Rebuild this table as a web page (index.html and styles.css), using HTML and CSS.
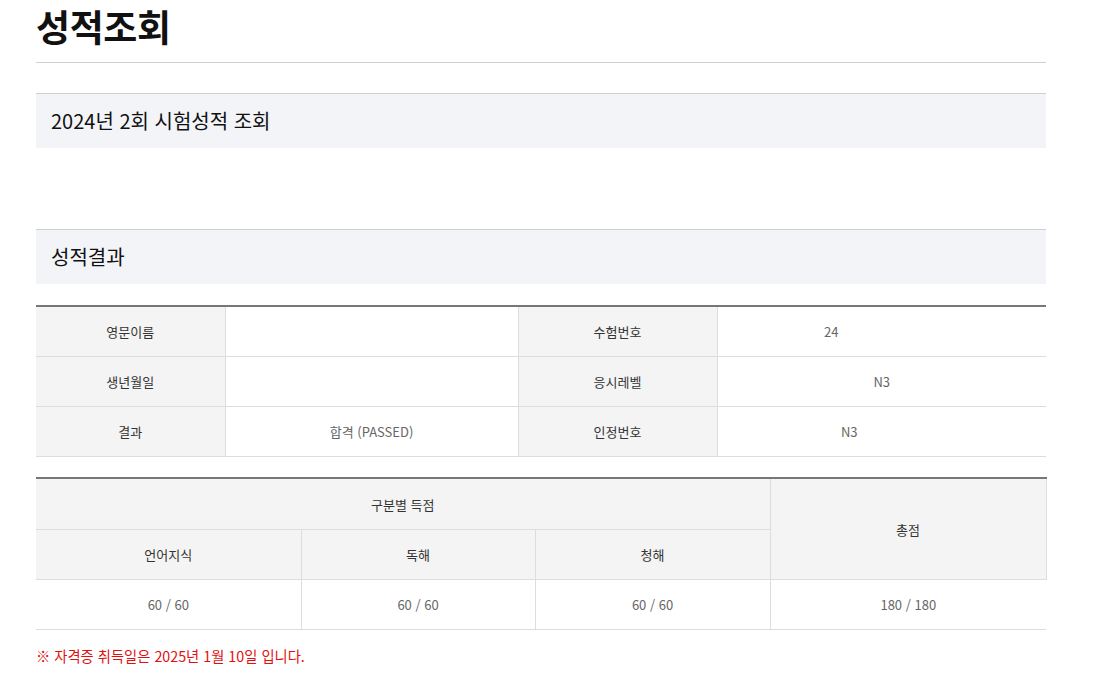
FILE: index.html
```html
<!DOCTYPE html>
<html lang="ko">
<head>
<meta charset="utf-8">
<title>성적조회</title>
<link rel="stylesheet" href="styles.css">
</head>
<body>
<div class="wrap">
  <h1 class="page-title">성적조회</h1>
  <div class="sec-head">2024년 2회 시험성적 조회</div>
  <div class="spacer"></div>
  <div class="sec-head">성적결과</div>

  <table class="info">
    <colgroup>
      <col class="c1"><col class="c2"><col class="c3"><col class="c4">
    </colgroup>
    <tr>
      <th>영문이름</th><td></td>
      <th>수험번호</th><td>24<span class="mask">00000000000000</span></td>
    </tr>
    <tr>
      <th>생년월일</th><td></td>
      <th>응시레벨</th><td>N3</td>
    </tr>
    <tr>
      <th>결과</th><td>합격 (PASSED)</td>
      <th>인정번호</th><td>N3<span class="mask">000000000</span></td>
    </tr>
  </table>

  <table class="score">
    <colgroup>
      <col class="s1"><col class="s2"><col class="s3"><col class="s4">
    </colgroup>
    <tr>
      <th colspan="3">구분별 득점</th>
      <th rowspan="2" class="total">총점</th>
    </tr>
    <tr>
      <th>언어지식</th><th>독해</th><th>청해</th>
    </tr>
    <tr>
      <td>60 / 60</td><td>60 / 60</td><td>60 / 60</td><td>180 / 180</td>
    </tr>
  </table>

  <p class="note">※ 자격증 취득일은 2025년 1월 10일 입니다.</p>
</div>
</body>
</html>
```
FILE: styles.css
```css
html, body {
  margin: 0;
  padding: 0;
  background: #fff;
}
body {
  font-family: "Noto Sans CJK KR", "Noto Sans", sans-serif;
  color: #111;
}
.wrap {
  width: 1010px;
  margin-left: 36px;
}
.page-title {
  margin: 0;
  font-size: 37px;
  font-weight: 700;
  line-height: 52px;
  height: 62px;
  border-bottom: 1px solid #cfcfcf;
  letter-spacing: -0.4px;
}
.sec-head {
  margin-top: 30px;
  border-top: 1px solid #cfcfcf;
  background: #f3f4f8;
  height: 54px;
  line-height: 54px;
  padding-left: 15px;
  font-size: 20px;
  color: #111;
  letter-spacing: 0;
}
.spacer {
  height: 81px;
}
.spacer + .sec-head {
  margin-top: 0;
}
table {
  width: 1010px;
  border-collapse: collapse;
  table-layout: fixed;
  font-size: 13px;
}
table.info {
  margin-top: 21px;
  border-top: 2px solid #777;
}
table th, table td {
  border: 1px solid #ddd;
  text-align: center;
  font-weight: 400;
  padding: 0;
}
table th {
  background: #f4f4f4;
  color: #333;
}
table td {
  background: #fff;
  color: #666;
}
table tr > :first-child {
  border-left: none;
}
table tr > :last-child {
  border-right: none;
}
table.info th, table.info td {
  height: 49px;
}
.info .c1 { width: 189px; }
.info .c2 { width: 293px; }
.info .c3 { width: 199px; }
.info .c4 { width: 329px; }
.mask {
  color: transparent;
}
table.score {
  margin-top: 20px;
  border-top: 2px solid #777;
}
table.score th, table.score td {
  height: 49px;
}
table.score tr:first-child th {
  height: 50px;
}
table.score th.total {
  border-right: 1px solid #ddd;
}
.score .s1 { width: 265px; }
.score .s2 { width: 234px; }
.score .s3 { width: 235px; }
.score .s4 { width: 276px; }
.note {
  margin: 15px 0 0 0;
  font-size: 14.3px;
  color: #e01010;
  letter-spacing: 0;
}
```
